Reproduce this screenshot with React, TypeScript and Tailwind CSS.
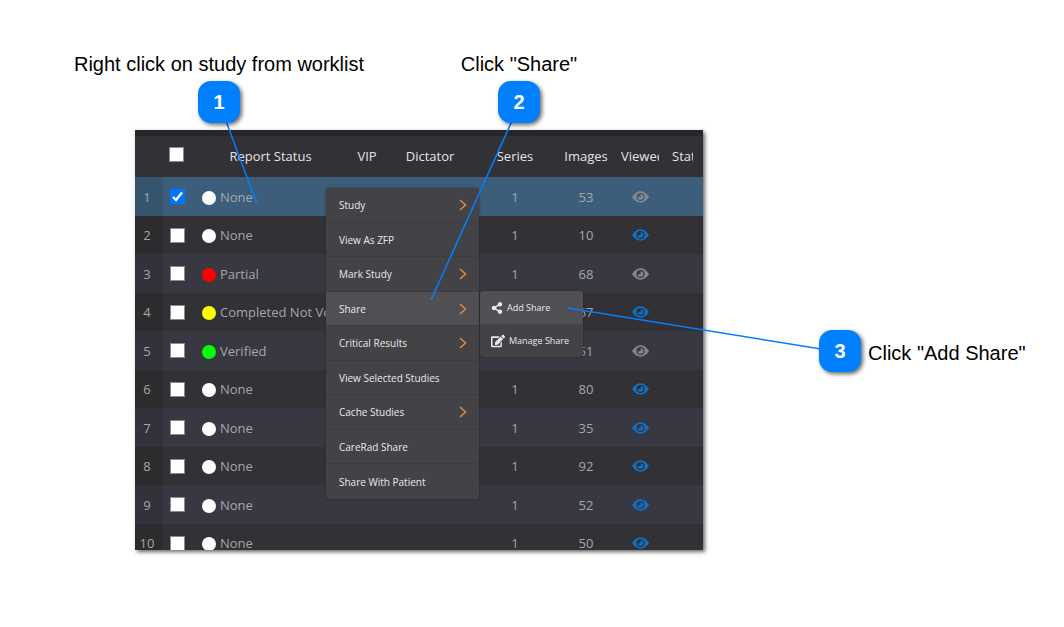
import React from 'react'
import clsx from 'clsx'
import { FaEdit, FaShareAlt } from 'react-icons/fa'

type Study = {
  status: string
  dot: string
  series: number
  images: number
  viewed: boolean
}

const studies: Study[] = [
  { status: 'None', dot: 'bg-white', series: 1, images: 53, viewed: false },
  { status: 'None', dot: 'bg-white', series: 1, images: 10, viewed: true },
  { status: 'Partial', dot: 'bg-[#ff0000]', series: 1, images: 68, viewed: false },
  { status: 'Completed Not Verified', dot: 'bg-[#ffff00]', series: 1, images: 67, viewed: true },
  { status: 'Verified', dot: 'bg-[#00ff00]', series: 1, images: 51, viewed: false },
  { status: 'None', dot: 'bg-white', series: 1, images: 80, viewed: true },
  { status: 'None', dot: 'bg-white', series: 1, images: 35, viewed: true },
  { status: 'None', dot: 'bg-white', series: 1, images: 92, viewed: true },
  { status: 'None', dot: 'bg-white', series: 1, images: 52, viewed: true },
  { status: 'None', dot: 'bg-white', series: 1, images: 50, viewed: true },
]

const menuItems = [
  { label: 'Study', sub: true },
  { label: 'View As ZFP', sub: false },
  { label: 'Mark Study', sub: true },
  { label: 'Share', sub: true },
  { label: 'Critical Results', sub: true },
  { label: 'View Selected Studies', sub: false },
  { label: 'Cache Studies', sub: true },
  { label: 'CareRad Share', sub: false },
  { label: 'Share With Patient', sub: false },
]

function Badge(props: { n: number }) {
  return (
    <span className="z-20 flex size-[42px] shrink-0 items-center justify-center rounded-[13px] bg-[#0080ff] text-xl font-bold text-white shadow-[2px_2px_4px_rgba(0,0,0,0.6)]">
      {props.n}
    </span>
  )
}

function Tick(props: { label: string; checked?: boolean }) {
  return (
    <label className="relative mx-auto block size-[15px]">
      <input
        type="checkbox"
        aria-label={props.label}
        defaultChecked={props.checked}
        className="peer block size-[15px] appearance-none border border-[#8a8a8c] bg-white checked:border-[#0075ff] checked:bg-[#0075ff]"
      />
      <svg viewBox="0 0 15 15" className="pointer-events-none absolute inset-0 hidden size-[15px] peer-checked:block" fill="none" stroke="#fff" strokeWidth="2.4">
        <path d="M3 8 L6 11 L12 3.5" />
      </svg>
    </label>
  )
}

function EyeIcon(props: { className: string }) {
  return (
    <svg viewBox="0 0 17 12" className={clsx('mx-auto h-3 w-[17px]', props.className)} fill="currentColor" fillRule="evenodd">
      <path d="M0 6 C2.6 2.2 5.2 0.3 8.5 0.3 S14.4 2.2 17 6 C14.4 9.8 11.8 11.7 8.5 11.7 S2.6 9.8 0 6 Z M8.5 1.9 A4.1 4.1 0 1 0 8.5 10.1 A4.1 4.1 0 1 0 8.5 1.9 Z" />
      <path d="M8.7 3.2 A2.8 2.8 0 1 1 5.7 6.2 L8.1 6.2 A0.8 0.8 0 0 0 8.7 5.4 Z" />
    </svg>
  )
}

function Worklist() {
  return (
    <table className="w-full table-fixed border-collapse whitespace-nowrap text-center text-[13px] leading-5 text-[#a6a6a8]">
      <colgroup>
        <col className="w-[28px]" />
        <col className="w-[29px]" />
        <col className="w-[157px]" />
        <col className="w-[36px]" />
        <col className="w-[90px]" />
        <col className="w-[80px]" />
        <col className="w-[62px]" />
        <col className="w-[46px]" />
        <col />
      </colgroup>
      <thead>
        <tr className="h-[41px] bg-[#323135] text-[#e4e4e4]">
          <th />
          <th className="pr-[3px] pb-[5px]">
            <Tick label="Select all studies" />
          </th>
          <th className="pb-px font-normal">Report Status</th>
          <th className="pb-px font-normal">VIP</th>
          <th className="pb-px font-normal">Dictator</th>
          <th className="pb-px font-normal">Series</th>
          <th className="pb-px font-normal">Images</th>
          <th className="px-1 pb-px font-normal">
            <div className="overflow-hidden text-left">Viewed</div>
          </th>
          <th className="pr-[10px] pb-px pl-[9px] font-normal">
            <div className="overflow-hidden text-left">Status</div>
          </th>
        </tr>
      </thead>
      <tbody>
        {studies.map((study, i) => (
          <tr
            key={i}
            className={clsx(
              'odd:h-[39px] even:h-[38px]',
              i === 0 ? 'bg-[#3c5e7b]' : 'odd:bg-[#383842] even:bg-[#323135]'
            )}
          >
            <td className="bg-black/10 pr-1">{i + 1}</td>
            <td>
              <Tick label={`Select study ${i + 1}`} checked={i === 0} />
            </td>
            <td>
              <div className="flex items-center gap-1 pl-[10px]">
                <span className={clsx('mt-0.5 size-[14px] shrink-0 rounded-full', study.dot)} />
                {study.status}
              </div>
            </td>
            <td />
            <td />
            <td>{study.series}</td>
            <td>{study.images}</td>
            <td>
              <EyeIcon className={study.viewed ? 'text-[#0f70c4]' : 'text-[#85878b]'} />
            </td>
            <td />
          </tr>
        ))}
      </tbody>
    </table>
  )
}

function ContextMenu() {
  return (
    <div className="absolute top-[58px] left-[191px] flex items-start text-[#e8e8e8]">
      <div className="w-[153px] overflow-hidden rounded-[3px] bg-[#434347] shadow-[0_0_2px_#222]">
        {menuItems.map((item) => (
          <button
            key={item.label}
            className={clsx(
              'flex w-full items-center justify-between border-b border-[#3d3d41] pr-3 pl-[13px] text-left text-[10px] last:border-b-0 odd:h-[35px] even:h-[34px]',
              item.label === 'Share' && 'bg-[#505054]'
            )}
          >
            {item.label}
            {item.sub && (
              <svg viewBox="0 0 8 12" className="h-3 w-2" fill="none" stroke="#e08a45" strokeWidth="1.5">
                <path d="M1 1 L6.5 6 L1 11" />
              </svg>
            )}
          </button>
        ))}
      </div>
      <div className="mt-[103px] ml-px w-[103px] overflow-hidden rounded-[3px] bg-[#434347] text-[9px] shadow-[0_0_2px_#222]">
        <button className="flex h-[33px] w-full items-center gap-1 bg-[#505054] pl-[11px]">
          <FaShareAlt className="size-3" />
          Add Share
        </button>
        <button className="flex h-[33px] w-full items-center gap-1 pl-[11px]">
          <FaEdit className="size-[14px]" />
          Manage Share
        </button>
      </div>
    </div>
  )
}

export default function App() {
  return (
    <main className="relative min-h-screen bg-white pt-[50px] pb-12 font-['Liberation_Sans',Arial,sans-serif] text-xl leading-7 whitespace-nowrap text-black">
      <div className="flex gap-[99px] pl-[75px]">
        <div className="flex w-[288px] flex-col items-center gap-[3px]">
          <p>Right click on study from worklist</p>
          <Badge n={1} />
        </div>
        <div className="flex w-[114px] flex-col items-center gap-[3px]">
          <p>Click "Share"</p>
          <Badge n={2} />
        </div>
      </div>

      <div className="mt-[7px] flex items-start pl-[135px]">
        <section className="relative h-[420px] w-full max-w-[568px] bg-[#27272b] pt-1.5 font-['Open_Sans',sans-serif] shadow-[2px_2px_4px_rgba(0,0,0,0.6)]">
          <div className="h-full overflow-hidden">
            <Worklist />
          </div>
          <ContextMenu />
        </section>
        <div className="mt-[200px] ml-[116px] flex shrink-0 items-center gap-[7px]">
          <Badge n={3} />
          <p className="pt-1">Click "Add Share"</p>
        </div>
      </div>

      <svg className="pointer-events-none absolute top-0 left-0 z-10" width="1064" height="627" stroke="#0080ff" strokeWidth="1.5">
        <line x1="226" y1="121" x2="257" y2="204" />
        <line x1="512" y1="121" x2="431" y2="300" />
        <line x1="568" y1="308" x2="821" y2="349" />
      </svg>
    </main>
  )
}
